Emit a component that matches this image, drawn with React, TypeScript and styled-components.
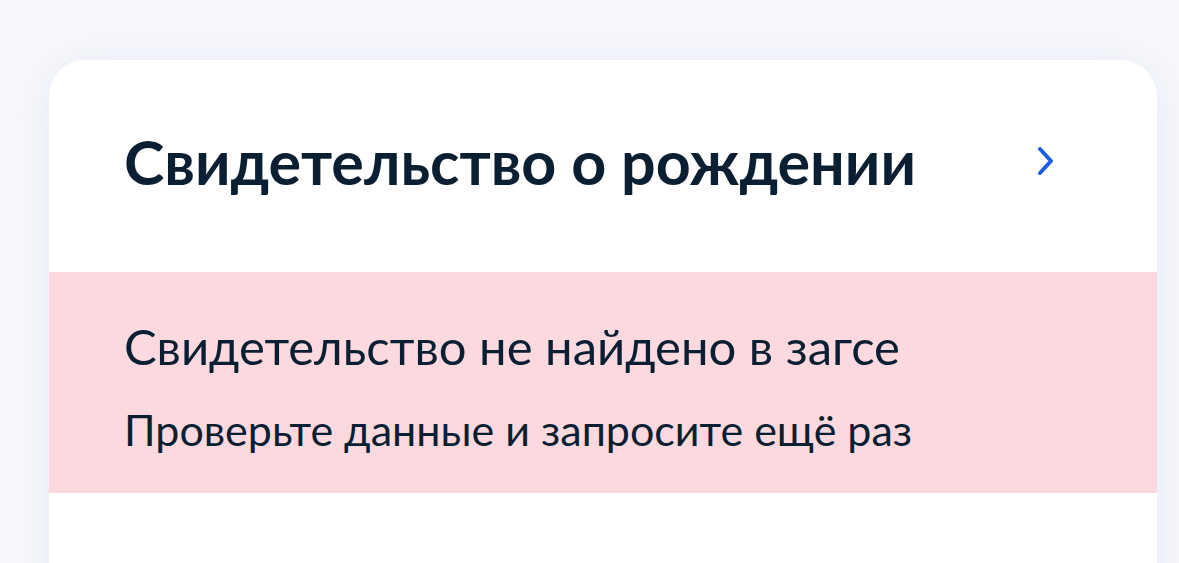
import * as React from 'react'
import styled, { createGlobalStyle } from 'styled-components'

const GlobalStyle = createGlobalStyle`
    html, body {
        margin: 0;
        padding: 0;
        background: #f7f8fc;
        font-family: Lato, "Noto Sans", sans-serif;
        overflow: hidden;
    }
`

const Page = styled.div`
    width: 1179px;
    height: 563px;
    padding: 60px 22px 0 49px;
    box-sizing: border-box;
    overflow: hidden;
`

const Card = styled.div`
    width: 1108px;
    height: 600px;
    background: #ffffff;
    border-radius: 36px;
    box-shadow: 0 4px 40px rgba(110, 130, 200, 0.12);
    overflow: hidden;
`

const Header = styled.div`
    display: flex;
    align-items: center;
    justify-content: space-between;
    height: 212px;
    padding: 0 101px 9px 75px;
    box-sizing: border-box;
`

const Title = styled.h1`
    margin: 0;
    font-size: 61px;
    font-weight: 700;
    line-height: 1.2;
    color: #0b1f33;
`

const Chevron = styled.svg`
    width: 20px;
    height: 30px;
    margin-bottom: 2px;
`

const Alert = styled.div`
    display: flex;
    flex-direction: column;
    gap: 33px;
    height: 221px;
    padding: 46px 75px 0;
    box-sizing: border-box;
    background: #fcd9df;
`

const AlertTitle = styled.div`
    font-size: 49px;
    color: #0b1f33;
    line-height: 56px;
`

const AlertText = styled.div`
    font-size: 43px;
    color: #0b1f33;
    line-height: 46px;
`

export default function App() {
    return (
        <Page>
            <GlobalStyle />
            <Card>
                <Header>
                    <Title>Свидетельство о рождении</Title>
                    <Chevron viewBox="0 0 20 30">
                        <path d="M4 3 L15 15 L4 27" fill="none" stroke="#1d5deb" strokeWidth="4" strokeLinecap="round" strokeLinejoin="round" />
                    </Chevron>
                </Header>
                <Alert>
                    <AlertTitle>Свидетельство не найдено в загсе</AlertTitle>
                    <AlertText>Проверьте данные и запросите ещё раз</AlertText>
                </Alert>
            </Card>
        </Page>
    )
}
